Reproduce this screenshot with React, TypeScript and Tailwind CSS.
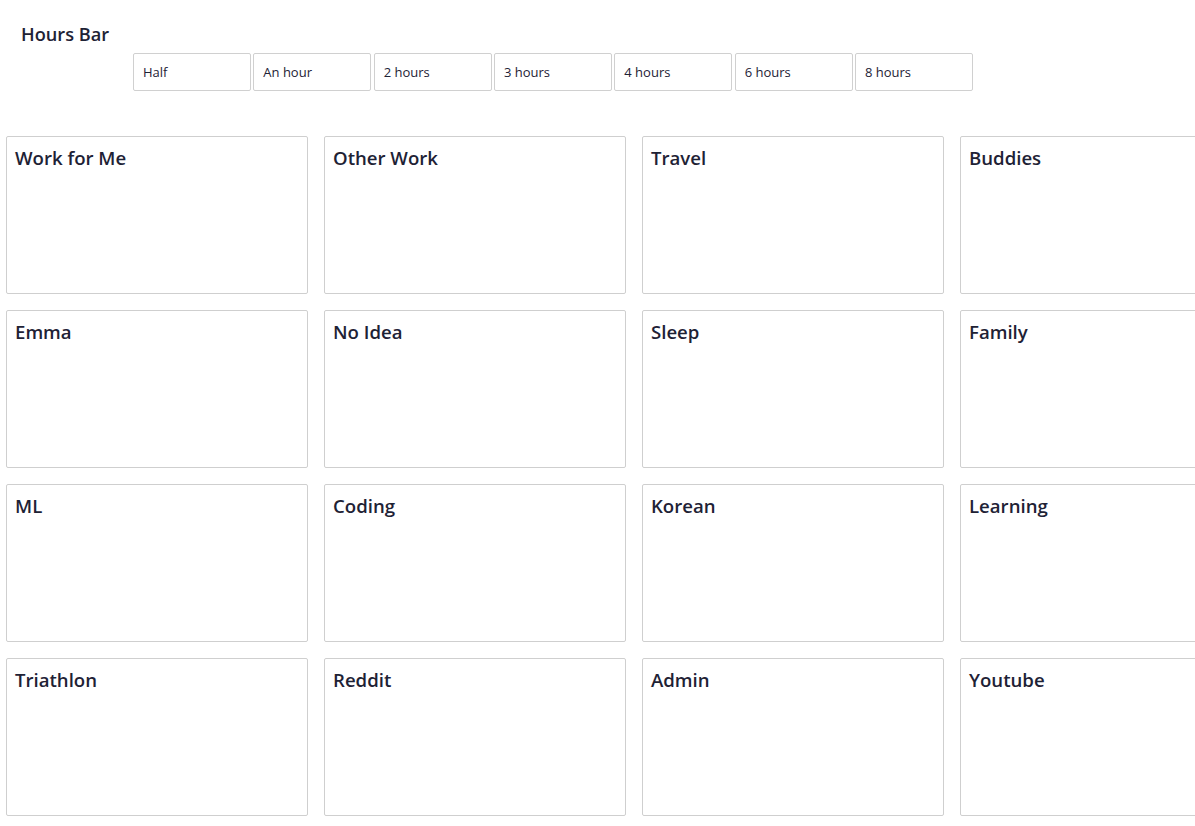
import React from "react";

const hours = ["Half", "An hour", "2 hours", "3 hours", "4 hours", "6 hours", "8 hours"];

const categories = [
    "Work for Me", "Other Work", "Travel", "Buddies",
    "Emma", "No Idea", "Sleep", "Family",
    "ML", "Coding", "Korean", "Learning",
    "Triathlon", "Reddit", "Admin", "Youtube",
];

export default function App() {
    return (
        <div className="w-[1195px] h-[826px] overflow-hidden bg-white text-[#1e2235] font-['Open_Sans',sans-serif]">
            {/* Hours bar */}
            <div className="pt-[22px] pl-[21px]">
                <h2 className="text-[18.2px] leading-[24px] font-semibold">Hours Bar</h2>
            </div>
            <div className="flex gap-[2.33px] pl-[133px] mt-[7px]">
                {hours.map((h) => (
                    <button
                        key={h}
                        className="w-[118px] h-[38px] border border-[#d0d0d0] rounded-[2px] bg-white text-left pl-[9px] pt-[1px] text-[13px] text-[#1e2235]"
                    >
                        {h}
                    </button>
                ))}
            </div>

            {/* Category cards */}
            <div className="grid grid-cols-[repeat(4,302px)] gap-4 pl-[6px] mt-[45px]">
                {categories.map((c) => (
                    <div key={c} className="h-[158px] border border-[#cfcfcf] rounded-[2px] px-[8px] pt-[8px]">
                        <h3 className="text-[18.6px] leading-[26px] font-semibold">{c}</h3>
                    </div>
                ))}
            </div>
        </div>
    );
}
